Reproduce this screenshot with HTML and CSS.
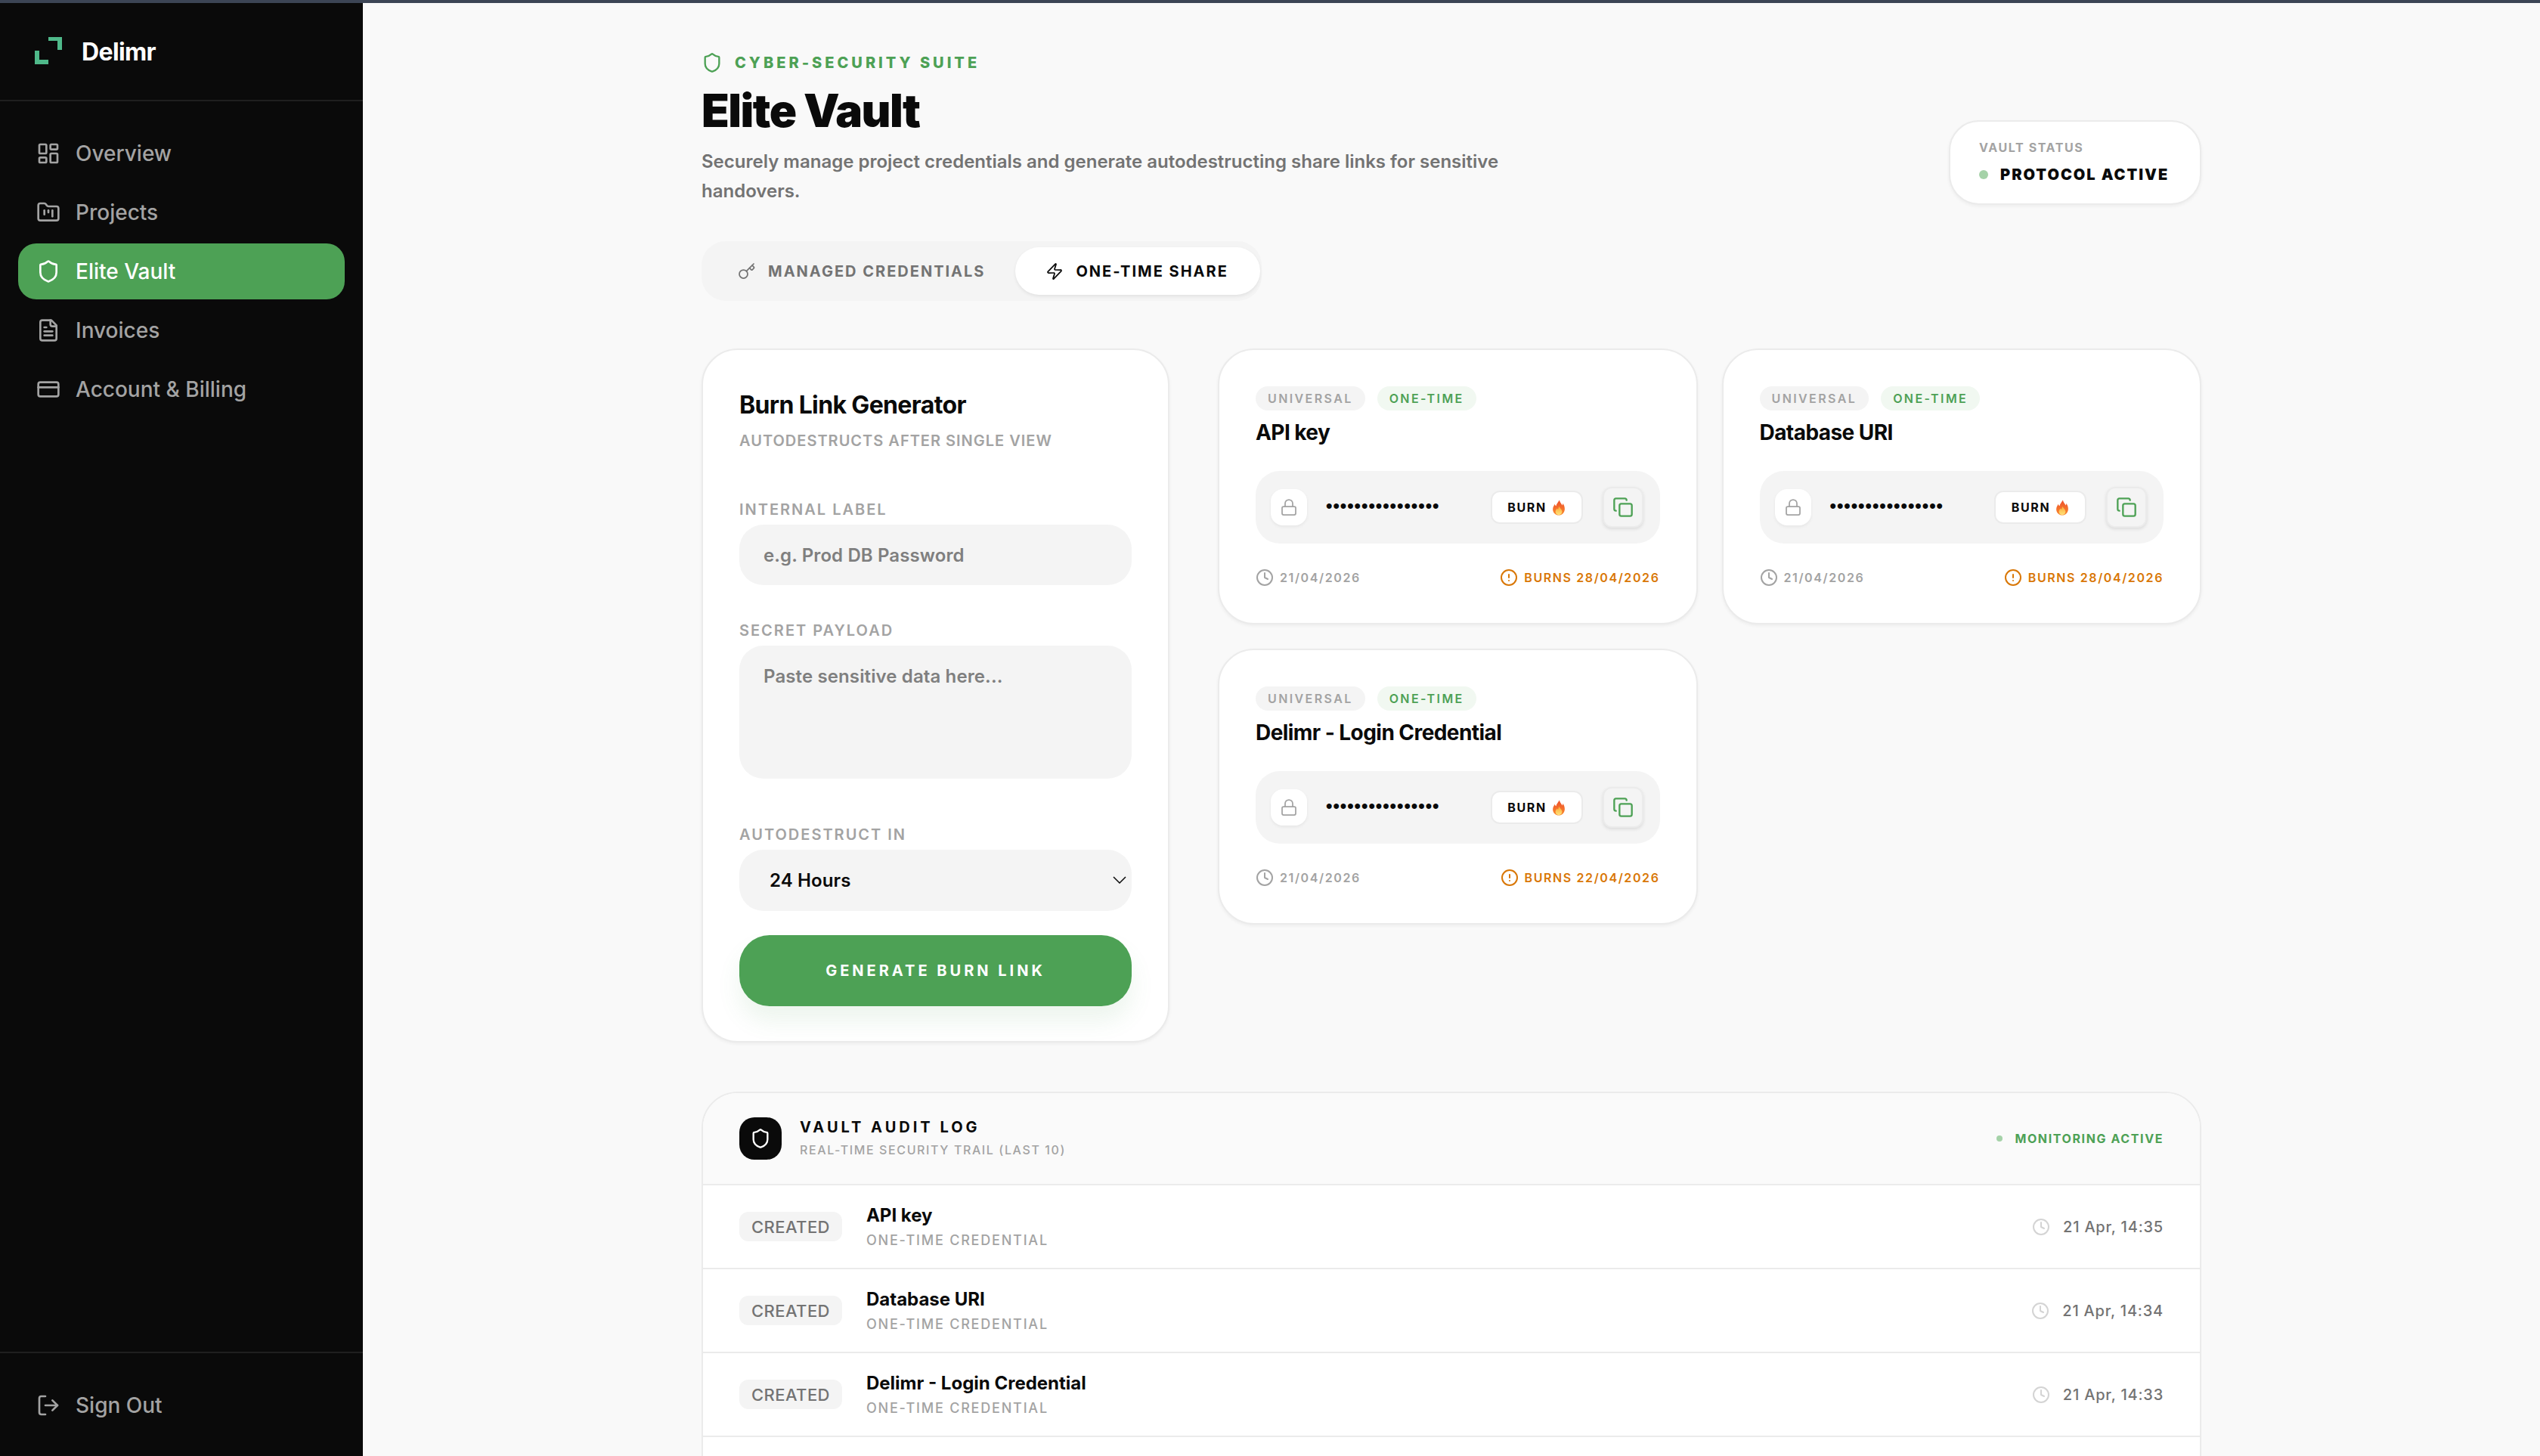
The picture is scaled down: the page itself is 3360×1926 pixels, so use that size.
FILE: index.html
```html
<!DOCTYPE html>
<html lang="en">
<head>
  <meta charset="UTF-8">
  <meta name="viewport" content="width=device-width, initial-scale=1.0">
  <title>Elite Vault - Delimr</title>
  <link rel="stylesheet" href="styles.css">
</head>
<body>

  <!-- Icon sprite -->
  <svg class="sprite" aria-hidden="true">
    <defs>
      <linearGradient id="flame-out" x1="0" y1="0" x2="0" y2="1"><stop offset="0" stop-color="#ee4f2b"/><stop offset="1" stop-color="#f98a2c"/></linearGradient>
      <linearGradient id="flame-in" x1="0" y1="0" x2="0" y2="1"><stop offset="0" stop-color="#fba834"/><stop offset="1" stop-color="#ffe27a"/></linearGradient>
    </defs>
    <symbol id="i-dashboard" viewBox="0 0 24 24"><rect width="7" height="9" x="3" y="3" rx="1"/><rect width="7" height="5" x="14" y="3" rx="1"/><rect width="7" height="9" x="14" y="12" rx="1"/><rect width="7" height="5" x="3" y="16" rx="1"/></symbol>
    <symbol id="i-folder" viewBox="0 0 24 24"><path d="M4 20h16a2 2 0 0 0 2-2V8a2 2 0 0 0-2-2h-7.93a2 2 0 0 1-1.66-.9l-.82-1.2A2 2 0 0 0 7.93 3H4a2 2 0 0 0-2 2v13c0 1.1.9 2 2 2Z"/><path d="M8 10v4"/><path d="M12 10v2"/><path d="M16 10v6"/></symbol>
    <symbol id="i-shield" viewBox="0 0 24 24"><path d="M20 13c0 5-3.5 7.5-7.66 8.95a1 1 0 0 1-.67-.01C7.5 20.5 4 18 4 13V6a1 1 0 0 1 1-1c2 0 4.5-1.2 6.24-2.72a1.17 1.17 0 0 1 1.52 0C14.51 3.81 17 5 19 5a1 1 0 0 1 1 1z"/></symbol>
    <symbol id="i-file" viewBox="0 0 24 24"><path d="M15 2H6a2 2 0 0 0-2 2v16a2 2 0 0 0 2 2h12a2 2 0 0 0 2-2V7Z"/><path d="M14 2v4a2 2 0 0 0 2 2h4"/><path d="M10 9H8"/><path d="M16 13H8"/><path d="M16 17H8"/></symbol>
    <symbol id="i-card" viewBox="0 0 24 24"><rect width="20" height="14" x="2" y="5" rx="2"/><line x1="2" x2="22" y1="10" y2="10"/></symbol>
    <symbol id="i-logout" viewBox="0 0 24 24"><path d="M9 21H5a2 2 0 0 1-2-2V5a2 2 0 0 1 2-2h4"/><polyline points="16 17 21 12 16 7"/><line x1="21" x2="9" y1="12" y2="12"/></symbol>
    <symbol id="i-key" viewBox="0 0 24 24"><path d="m15.5 7.5 2.3 2.3a1 1 0 0 0 1.4 0l2.1-2.1a1 1 0 0 0 0-1.4L19 4"/><path d="m21 2-9.6 9.6"/><circle cx="7.5" cy="15.5" r="5.5"/></symbol>
    <symbol id="i-zap" viewBox="0 0 24 24"><path d="M4 14a1 1 0 0 1-.78-1.63l9.9-10.2a.5.5 0 0 1 .86.46l-1.92 6.02A1 1 0 0 0 13 10h7a1 1 0 0 1 .78 1.63l-9.9 10.2a.5.5 0 0 1-.86-.46l1.92-6.02A1 1 0 0 0 11 14z"/></symbol>
    <symbol id="i-lock" viewBox="0 0 24 24"><rect width="18" height="11" x="3" y="11" rx="2"/><path d="M7 11V7a5 5 0 0 1 10 0v4"/></symbol>
    <symbol id="i-copy" viewBox="0 0 24 24"><rect width="14" height="14" x="8" y="8" rx="2"/><path d="M4 16c-1.1 0-2-.9-2-2V4c0-1.1.9-2 2-2h10c1.1 0 2 .9 2 2"/></symbol>
    <symbol id="i-clock" viewBox="0 0 24 24"><circle cx="12" cy="12" r="10"/><polyline points="12 6 12 12 16 14"/></symbol>
    <symbol id="i-alert" viewBox="0 0 24 24"><circle cx="12" cy="12" r="10"/><line x1="12" x2="12" y1="8" y2="12"/><line x1="12" x2="12.01" y1="16" y2="16"/></symbol>
    <symbol id="i-flame" viewBox="0 0 20 24"><path fill="url(#flame-out)" d="M11 .5C11.500 4 14 6 15.500 8.500 16 7.500 16.200 6.500 16 5.500 18 8 19 11 19 14 19 19.500 15 23.500 10 23.500S1 19.500 1 14.500C1 11 3 8.500 4 6.500 4.500 8 5 9 6 9.500 6.500 6 9 4 11 .5Z"/><path fill="url(#flame-in)" d="M10.500 10C11 12.500 15 14.500 15 18 15 21 12.800 23 10 23S5 21 5 18C5 15.500 6.500 14.500 7.500 13 8 14 8.500 14.500 9 14.800 9.200 13 10 11.500 10.500 10Z"/></symbol>
  </svg>

  <div class="top-strip"></div>

  <div class="app">
    <!-- Sidebar -->
    <aside class="sidebar">
      <div class="brand">
        <svg class="brand-logo" viewBox="0 0 36 36"><polygon points="18,0 36,0 36,17 30,17 30,5 18,5"/><polygon points="0,18 6,18 6,30 18,30 18,36 0,36"/></svg>
        <span class="brand-name">Delimr</span>
      </div>
      <nav class="nav">
        <a class="nav-item"><svg class="icon icon-nav"><use href="#i-dashboard"/></svg>Overview</a>
        <a class="nav-item"><svg class="icon icon-nav"><use href="#i-folder"/></svg>Projects</a>
        <a class="nav-item active"><svg class="icon icon-nav"><use href="#i-shield"/></svg>Elite Vault</a>
        <a class="nav-item"><svg class="icon icon-nav"><use href="#i-file"/></svg>Invoices</a>
        <a class="nav-item"><svg class="icon icon-nav"><use href="#i-card"/></svg>Account &amp; Billing</a>
      </nav>
      <div class="sidebar-foot">
        <a class="nav-item"><svg class="icon icon-nav"><use href="#i-logout"/></svg>Sign Out</a>
      </div>
    </aside>

    <!-- Main content -->
    <main class="main">
      <div class="content">

        <header class="page-head">
          <div class="page-title">
            <div class="eyebrow"><svg class="icon icon-eyebrow"><use href="#i-shield"/></svg>Cyber-Security Suite</div>
            <h1>Elite Vault</h1>
            <p class="lead">Securely manage project credentials and generate autodestructing share links for sensitive handovers.</p>
          </div>
          <div class="status-card">
            <div class="status-label">Vault Status</div>
            <div class="status-value"><span class="dot"></span>Protocol Active</div>
          </div>
        </header>

        <div class="tabs">
          <button class="tab"><svg class="icon icon-tab"><use href="#i-key"/></svg>Managed Credentials</button>
          <button class="tab active"><svg class="icon icon-tab"><use href="#i-zap"/></svg>One-Time Share</button>
        </div>

        <section class="vault-grid">
          <!-- Burn link form -->
          <form class="panel generator">
            <h2>Burn Link Generator</h2>
            <p class="panel-sub">Autodestructs after single view</p>

            <label class="field-label label-first" for="burnLabel">Internal Label</label>
            <input class="input" id="burnLabel" type="text" placeholder="e.g. Prod DB Password">

            <label class="field-label label-tight" for="burnPayload">Secret Payload</label>
            <textarea class="input textarea" id="burnPayload" placeholder="Paste sensitive data here..."></textarea>

            <label class="field-label" for="burnTtl">Autodestruct In</label>
            <div class="select-wrap">
              <select class="input select" id="burnTtl">
                <option>24 Hours</option>
                <option>7 Days</option>
              </select>
              <svg class="chevron" viewBox="0 0 18 10"><polyline points="1,1 9,9 17,1"/></svg>
            </div>

            <button class="btn-generate" type="button">Generate Burn Link</button>
          </form>

          <!-- Secret cards -->
          <div class="cards">
            <article class="panel secret">
              <div class="badges"><span class="badge">Universal</span><span class="badge badge-green">One-Time</span></div>
              <h3>API key</h3>
              <div class="secret-box">
                <span class="lock-tile"><svg class="icon icon-lock"><use href="#i-lock"/></svg></span>
                <span class="dots">••••••••••••••••</span>
                <button class="btn-burn">Burn<svg class="flame"><use href="#i-flame"/></svg></button>
                <button class="btn-copy"><svg class="icon icon-copy"><use href="#i-copy"/></svg></button>
              </div>
              <div class="secret-foot">
                <span class="meta"><svg class="icon icon-meta"><use href="#i-clock"/></svg>21/04/2026</span>
                <span class="meta meta-burn"><svg class="icon icon-meta"><use href="#i-alert"/></svg>Burns 28/04/2026</span>
              </div>
            </article>

            <article class="panel secret">
              <div class="badges"><span class="badge">Universal</span><span class="badge badge-green">One-Time</span></div>
              <h3>Database URI</h3>
              <div class="secret-box">
                <span class="lock-tile"><svg class="icon icon-lock"><use href="#i-lock"/></svg></span>
                <span class="dots">••••••••••••••••</span>
                <button class="btn-burn">Burn<svg class="flame"><use href="#i-flame"/></svg></button>
                <button class="btn-copy"><svg class="icon icon-copy"><use href="#i-copy"/></svg></button>
              </div>
              <div class="secret-foot">
                <span class="meta"><svg class="icon icon-meta"><use href="#i-clock"/></svg>21/04/2026</span>
                <span class="meta meta-burn"><svg class="icon icon-meta"><use href="#i-alert"/></svg>Burns 28/04/2026</span>
              </div>
            </article>

            <article class="panel secret">
              <div class="badges"><span class="badge">Universal</span><span class="badge badge-green">One-Time</span></div>
              <h3>Delimr - Login Credential</h3>
              <div class="secret-box">
                <span class="lock-tile"><svg class="icon icon-lock"><use href="#i-lock"/></svg></span>
                <span class="dots">••••••••••••••••</span>
                <button class="btn-burn">Burn<svg class="flame"><use href="#i-flame"/></svg></button>
                <button class="btn-copy"><svg class="icon icon-copy"><use href="#i-copy"/></svg></button>
              </div>
              <div class="secret-foot">
                <span class="meta"><svg class="icon icon-meta"><use href="#i-clock"/></svg>21/04/2026</span>
                <span class="meta meta-burn"><svg class="icon icon-meta"><use href="#i-alert"/></svg>Burns 22/04/2026</span>
              </div>
            </article>
          </div>
        </section>

        <!-- Audit log -->
        <section class="audit">
          <div class="audit-head">
            <span class="audit-tile"><svg class="icon icon-audit"><use href="#i-shield"/></svg></span>
            <div class="audit-title">
              <div class="audit-name">Vault Audit Log</div>
              <div class="audit-sub">Real-time security trail (last 10)</div>
            </div>
            <div class="monitoring"><span class="dot dot-small"></span>Monitoring Active</div>
          </div>

          <div class="log-row">
            <span class="chip">CREATED</span>
            <div class="log-info">
              <div class="log-name">API key</div>
              <div class="log-sub">One-Time Credential</div>
            </div>
            <span class="log-time"><svg class="icon icon-meta"><use href="#i-clock"/></svg>21 Apr, 14:35</span>
          </div>
          <div class="log-row">
            <span class="chip">CREATED</span>
            <div class="log-info">
              <div class="log-name">Database URI</div>
              <div class="log-sub">One-Time Credential</div>
            </div>
            <span class="log-time"><svg class="icon icon-meta"><use href="#i-clock"/></svg>21 Apr, 14:34</span>
          </div>
          <div class="log-row">
            <span class="chip">CREATED</span>
            <div class="log-info">
              <div class="log-name">Delimr - Login Credential</div>
              <div class="log-sub">One-Time Credential</div>
            </div>
            <span class="log-time"><svg class="icon icon-meta"><use href="#i-clock"/></svg>21 Apr, 14:33</span>
          </div>
          <div class="log-row log-row-tail"></div>
        </section>

      </div>
    </main>
  </div>

</body>
</html>
```

FILE: styles.css
```css
* {
  box-sizing: border-box;
}
html, body {
  margin: 0;
  height: 100%;
  overflow: hidden;
}
body {
  font-family: Inter, "Liberation Sans", sans-serif;
  background: #f9f9f9;
  color: #0a0a0a;
  display: flex;
  flex-direction: column;
}
button, input, textarea, select {
  font-family: inherit;
}
.sprite {
  width: 0;
  height: 0;
  position: absolute;
}
.icon {
  fill: none;
  stroke: currentColor;
  stroke-width: 2;
  stroke-linecap: round;
  stroke-linejoin: round;
  flex-shrink: 0;
}
.top-strip {
  height: 4px;
  background: #3c4555;
  flex-shrink: 0;
}
.app {
  flex: 1;
  display: flex;
  min-height: 0;
}

/* Sidebar */
.sidebar {
  width: 480px;
  flex-shrink: 0;
  background: #0a0a0a;
  display: flex;
  flex-direction: column;
}
.brand {
  height: 130px;
  padding-left: 46px;
  display: flex;
  align-items: center;
  gap: 26px;
  border-bottom: 2px solid #1f1f1f;
}
.brand-logo {
  width: 36px;
  height: 36px;
  fill: #4fb98a;
  margin-top: -2px;
}
.brand-name {
  color: #fff;
  font-size: 32px;
  font-weight: 700;
  letter-spacing: -0.02em;
}
.nav {
  flex: 1;
  padding: 32px 24px;
  display: flex;
  flex-direction: column;
  gap: 4px;
}
.nav-item {
  height: 74px;
  padding: 0 24px;
  border-radius: 24px;
  display: flex;
  align-items: center;
  gap: 20px;
  color: #a3a3a3;
  font-size: 28px;
  font-weight: 500;
}
.nav-item.active {
  background: #4da155;
  color: #fff;
}
.icon-nav {
  width: 32px;
  height: 32px;
}
.sidebar-foot {
  padding: 32px 24px 30px;
  border-top: 2px solid #1f1f1f;
}

/* Main */
.main {
  flex: 1;
  min-width: 0;
  overflow: hidden;
}
.content {
  width: 1984px;
  margin: 0 auto;
  padding-top: 64px;
}
.page-head {
  display: flex;
  justify-content: space-between;
  align-items: flex-end;
}
.eyebrow {
  display: flex;
  align-items: center;
  gap: 16px;
  height: 30px;
  color: #4da155;
  font-size: 20px;
  font-weight: 800;
  letter-spacing: 0.2em;
  text-transform: uppercase;
}
.icon-eyebrow {
  width: 28px;
  height: 28px;
}
h1 {
  margin: 14px 0 0;
  font-size: 60px;
  line-height: 68px;
  font-weight: 900;
  letter-spacing: -0.025em;
}
.lead {
  margin: 14px 0 0;
  width: 1120px;
  font-size: 24px;
  line-height: 39px;
  font-weight: 600;
  color: #737373;
}
.status-card {
  width: 334px;
  height: 112px;
  margin-bottom: 1px;
  padding: 0 38px 2px;
  background: #fff;
  border: 2px solid #ebebeb;
  border-radius: 40px;
  box-shadow: 0 2px 4px rgba(0, 0, 0, 0.05);
  display: flex;
  flex-direction: column;
  justify-content: center;
  gap: 10px;
  white-space: nowrap;
}
.status-label {
  font-size: 16px;
  line-height: 24px;
  font-weight: 700;
  letter-spacing: 0.1em;
  color: #a3a3a3;
  text-transform: uppercase;
}
.status-value {
  display: flex;
  align-items: center;
  gap: 16px;
  font-size: 20px;
  line-height: 28px;
  font-weight: 900;
  letter-spacing: 0.1em;
  text-transform: uppercase;
}
.dot {
  width: 12px;
  height: 12px;
  border-radius: 50%;
  background: #a5d2a8;
}
.dot-small {
  width: 8px;
  height: 8px;
}

/* Tabs */
.tabs {
  display: inline-flex;
  margin-top: 47px;
  padding: 8px 2px 8px 8px;
  background: #f4f4f4;
  border-radius: 32px;
  vertical-align: top;
}
.tab {
  height: 63px;
  padding: 0 40px;
  border: none;
  background: none;
  border-radius: 32px;
  display: flex;
  align-items: center;
  gap: 16px;
  color: #737373;
  font-size: 20px;
  font-weight: 700;
  letter-spacing: 0.1em;
  text-transform: uppercase;
}
.tab.active {
  padding-right: 42px;
  background: #fff;
  color: #0a0a0a;
  box-shadow: 0 2px 4px rgba(0, 0, 0, 0.08);
}
.icon-tab {
  width: 24px;
  height: 24px;
  stroke-width: 1.75;
}

/* Panels */
.vault-grid {
  display: grid;
  grid-template-columns: 619px 1fr;
  gap: 64px;
  margin-top: 63px;
  align-items: start;
}
.panel {
  background: #fff;
  border: 2px solid #ebebeb;
  border-radius: 48px;
  box-shadow: 0 2px 4px rgba(0, 0, 0, 0.05);
}
.generator {
  padding: 50px 48px 46px;
  display: flex;
  flex-direction: column;
}
h2 {
  margin: 0;
  font-size: 32px;
  line-height: 46px;
  font-weight: 700;
  letter-spacing: -0.02em;
}
.panel-sub {
  margin: 10px 0 0;
  font-size: 20px;
  line-height: 28px;
  font-weight: 600;
  letter-spacing: 0.05em;
  color: #a3a3a3;
  text-transform: uppercase;
}
.field-label {
  margin-top: 48px;
  margin-bottom: 6px;
  font-size: 20px;
  line-height: 28px;
  font-weight: 600;
  letter-spacing: 0.1em;
  color: #a3a3a3;
  text-transform: uppercase;
}
.label-first {
  margin-top: 63px;
}
.label-tight {
  margin-top: 46px;
}
.input {
  display: block;
  flex-shrink: 0;
  width: 100%;
  height: 80px;
  padding: 0 32px;
  border: none;
  outline: none;
  background: #f4f4f4;
  border-radius: 32px;
  color: #0a0a0a;
  font-size: 24px;
  font-weight: 600;
  letter-spacing: 0.005em;
}
.input::placeholder {
  color: #7f7f7f;
}
.textarea {
  height: 176px;
  margin-bottom: 12px;
  padding-top: 26px;
  resize: none;
}
.select-wrap {
  position: relative;
}
.select {
  appearance: none;
  height: 81px;
  padding-left: 40px;
}
.chevron {
  position: absolute;
  top: 35px;
  right: 7px;
  width: 18px;
  height: 10px;
  fill: none;
  stroke: #0a0a0a;
  stroke-width: 1.5;
}
.btn-generate {
  margin-top: 32px;
  height: 94px;
  border: none;
  border-radius: 40px;
  background: #4da155;
  color: #fff;
  font-size: 20px;
  font-weight: 700;
  letter-spacing: 0.2em;
  text-transform: uppercase;
  box-shadow: 0 20px 30px rgba(77, 161, 85, 0.1);
}

/* Secret cards */
.cards {
  display: grid;
  grid-template-columns: 1fr 1fr;
  gap: 32px;
  align-items: start;
}
.secret {
  height: 365px;
  padding: 48px 48px 0;
}
.badges {
  display: flex;
  gap: 16px;
}
.badge {
  height: 32px;
  padding: 0 16px;
  border-radius: 16px;
  background: #f4f4f4;
  display: flex;
  align-items: center;
  color: #a3a3a3;
  font-size: 16px;
  font-weight: 600;
  letter-spacing: 0.15em;
  text-transform: uppercase;
}
.badge-green {
  background: #f1f8f1;
  color: #4da155;
}
h3 {
  margin: 11px 0 0;
  font-size: 28px;
  line-height: 36px;
  font-weight: 700;
  letter-spacing: -0.02em;
}
.secret-box {
  margin-top: 33px;
  height: 96px;
  padding: 0 22px 0 20px;
  background: #f4f4f4;
  border-radius: 32px;
  display: flex;
  align-items: center;
}
.lock-tile {
  width: 48px;
  height: 48px;
  border-radius: 16px;
  background: #fff;
  box-shadow: 0 2px 4px rgba(0, 0, 0, 0.06);
  display: flex;
  align-items: center;
  justify-content: center;
  color: #a3a3a3;
}
.icon-lock {
  width: 24px;
  height: 24px;
  stroke-width: 1.75;
}
.dots {
  flex: 1;
  margin-left: 22px;
  font-family: "Liberation Mono", monospace;
  font-size: 24px;
  font-weight: 700;
  letter-spacing: -5px;
  color: #0a0a0a;
}
.btn-burn {
  width: 122px;
  height: 44px;
  border: 2px solid #ebebeb;
  border-radius: 12px;
  background: #fff;
  display: flex;
  align-items: center;
  justify-content: center;
  gap: 7px;
  color: #0a0a0a;
  font-size: 16px;
  font-weight: 700;
  letter-spacing: 0.1em;
  text-transform: uppercase;
}
.flame {
  width: 18px;
  height: 21px;
}
.btn-copy {
  width: 54px;
  height: 54px;
  margin-left: 26px;
  padding: 0;
  border: 2px solid #ebebeb;
  border-radius: 12px;
  background: #f4f4f4;
  box-shadow: 0 2px 4px rgba(0, 0, 0, 0.1);
  display: flex;
  align-items: center;
  justify-content: center;
  color: #4da155;
}
.icon-copy {
  width: 28px;
  height: 28px;
}
.secret-foot {
  margin-top: 33px;
  display: flex;
  justify-content: space-between;
}
.meta {
  display: flex;
  align-items: center;
  gap: 8px;
  color: #a3a3a3;
  font-size: 16px;
  line-height: 24px;
  font-weight: 600;
  letter-spacing: 0.1em;
  text-transform: uppercase;
}
.meta-burn {
  color: #d97706;
}
.icon-meta {
  width: 24px;
  height: 24px;
}

/* Audit log */
.audit {
  margin-top: 65px;
  background: #fff;
  border: 2px solid #ebebeb;
  border-radius: 48px 48px 0 0;
  overflow: hidden;
}
.audit-head {
  height: 122px;
  padding: 0 48px;
  background: #fafafa;
  border-bottom: 2px solid #ebebeb;
  display: flex;
  align-items: center;
  gap: 24px;
}
.audit-tile {
  width: 56px;
  height: 56px;
  border-radius: 20px;
  background: #0a0a0a;
  color: #fff;
  display: flex;
  align-items: center;
  justify-content: center;
}
.icon-audit {
  width: 28px;
  height: 28px;
}
.audit-title {
  flex: 1;
  margin-top: -2px;
}
.audit-name {
  font-size: 20px;
  line-height: 28px;
  font-weight: 700;
  letter-spacing: 0.2em;
  text-transform: uppercase;
}
.audit-sub {
  margin-top: 4px;
  font-size: 16px;
  line-height: 24px;
  font-weight: 500;
  letter-spacing: 0.1em;
  color: #a3a3a3;
  text-transform: uppercase;
}
.monitoring {
  display: flex;
  align-items: center;
  gap: 16px;
  color: #4da155;
  font-size: 16px;
  font-weight: 700;
  letter-spacing: 0.1em;
  text-transform: uppercase;
}
.log-row {
  height: 111px;
  padding: 0 48px;
  border-bottom: 2px solid #ebebeb;
  display: flex;
  align-items: center;
  gap: 32px;
}
.log-row-tail {
  border-bottom: none;
}
.chip {
  height: 39px;
  padding: 0 16px;
  border-radius: 12px;
  background: #f4f4f4;
  display: flex;
  align-items: center;
  color: #737373;
  font-size: 22px;
  font-weight: 500;
  letter-spacing: 0.02em;
}
.log-info {
  flex: 1;
}
.log-name {
  font-size: 24px;
  line-height: 32px;
  font-weight: 700;
}
.log-sub {
  margin-top: 5px;
  font-size: 18px;
  line-height: 24px;
  font-weight: 500;
  letter-spacing: 0.1em;
  color: #a3a3a3;
  text-transform: uppercase;
}
.log-time {
  display: flex;
  align-items: center;
  gap: 17px;
  color: #737373;
  font-size: 20px;
  font-weight: 500;
  letter-spacing: 0.04em;
}
.log-time .icon {
  color: #d4d4d4;
}
```
